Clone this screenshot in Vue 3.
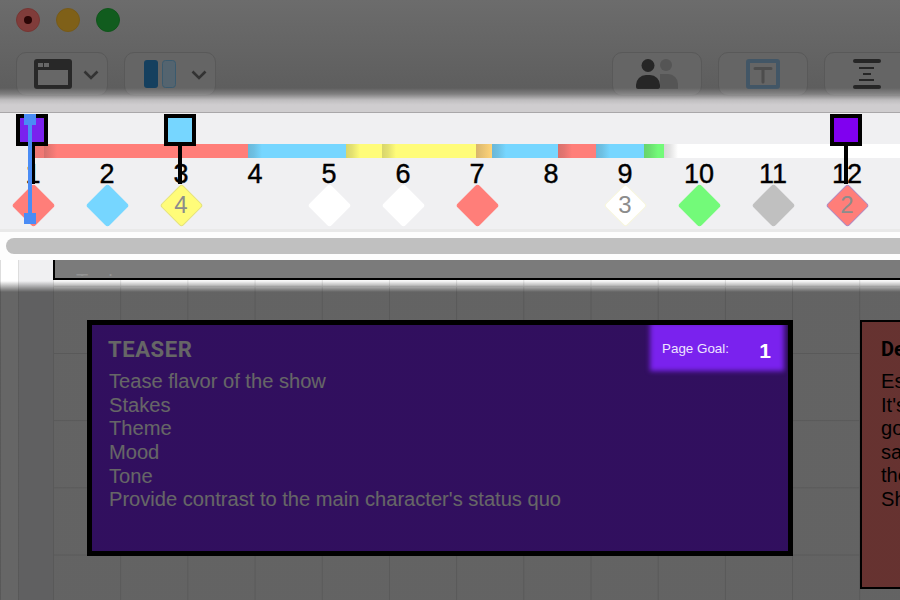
<script setup>
const numbers = [
  { n: 1, fill: '#ff7e79' },
  { n: 2, fill: '#76d6ff' },
  { n: 3, fill: '#fffc79', edge: '#e4e27a', label: 4 },
  { n: 4, fill: null },
  { n: 5, fill: '#ffffff' },
  { n: 6, fill: '#ffffff' },
  { n: 7, fill: '#ff7e79' },
  { n: 8, fill: null },
  { n: 9, fill: '#ffffff', edge: '#f7f6dc', label: 3 },
  { n: 10, fill: '#73fa79' },
  { n: 11, fill: '#c0c0c0' },
  { n: 12, fill: '#ff7e79', edge: '#b088c0', label: 2 }
]
const segments = [
  { w: 214, c: '#ff7e79', s: 'first' },
  { w: 98, c: '#76d6ff', s: 'shade' },
  { w: 36, c: '#fffc79', s: 'shade' },
  { w: 94, c: '#fffc79', s: 'shade' },
  { w: 16, c: '#ffd479', s: 'soft' },
  { w: 66, c: '#76d6ff', s: 'shade' },
  { w: 38, c: '#ff7e79', s: 'shade' },
  { w: 48, c: '#76d6ff', s: 'shade' },
  { w: 20, c: '#73fa79', s: 'shade' },
  { w: 236, c: '#ffffff', s: 'shade' }
]
const cardLines = ['Tease flavor of the show', 'Stakes', 'Theme', 'Mood', 'Tone', "Provide contrast to the main character's status quo"]
const sideLines = ['Establish the world', "It's the status quo", 'going on before', 'save the cat', 'the hero', 'Show']
</script>

<template>
  <div class="app">
    <header class="toolbar">
      <div class="lights">
        <span class="light red"><i></i></span>
        <span class="light amber"></span>
        <span class="light green"></span>
      </div>
      <div class="tools">
        <div class="group">
          <button class="btn wide">
            <svg width="38" height="30" viewBox="0 0 38 30">
              <rect width="38" height="30" rx="3" fill="#282828" />
              <rect x="4" y="11" width="30" height="15" fill="#676767" />
              <rect x="4" y="4" width="5" height="4" fill="#676767" />
              <rect x="10" y="4" width="5" height="4" fill="#676767" />
            </svg>
            <svg class="chev" width="16" height="10" viewBox="0 0 16 10"><path d="M1.5 1.5 8 8l6.500-6.500" fill="none" stroke="#333" stroke-width="2.600" /></svg>
          </button>
          <button class="btn wide">
            <svg width="32" height="28" viewBox="0 0 32 28">
              <rect width="14" height="28" rx="3" fill="#15405f" />
              <rect x="18.500" y=".5" width="13" height="27" rx="3" fill="#54646f" stroke="#3a5a6e" />
            </svg>
            <svg class="chev" width="16" height="10" viewBox="0 0 16 10"><path d="M1.5 1.5 8 8l6.500-6.500" fill="none" stroke="#333" stroke-width="2.600" /></svg>
          </button>
        </div>
        <div class="group">
          <button class="btn">
            <svg width="42" height="30" viewBox="0 0 42 30">
              <circle cx="30" cy="6" r="6" fill="#555" />
              <path d="M24 15h8a10 10 0 0 1 10 10v5H24z" fill="#555" />
              <circle cx="12" cy="6.500" r="6.500" fill="#262626" />
              <path d="M0 26a10 10 0 0 1 10-10h4a10 10 0 0 1 10 10v2a2 2 0 0 1-2 2H2a2 2 0 0 1-2-2z" fill="#262626" />
            </svg>
          </button>
          <button class="btn">
            <svg width="34" height="30" viewBox="0 0 34 30">
              <rect x="2" y="2" width="30" height="26" rx="1" fill="none" stroke="#425666" stroke-width="4" />
              <path d="M9 9.500h16M17 9.500V23" fill="none" stroke="#4d4d4d" stroke-width="3" stroke-linecap="round" />
            </svg>
          </button>
          <button class="btn last">
            <svg width="28" height="30" viewBox="0 0 28 30">
              <rect width="28" height="4" rx="2" fill="#262626" />
              <rect y="26" width="28" height="4" rx="2" fill="#262626" />
              <rect x="6" y="8" width="15" height="2" fill="#262626" />
              <rect x="10" y="14" width="8" height="2" fill="#262626" />
              <rect x="6" y="20" width="15" height="2" fill="#262626" />
            </svg>
          </button>
        </div>
      </div>
    </header>

    <section class="timeline">
      <div class="tracks">
        <div class="bar">
          <span v-for="(s, i) in segments" :key="i" class="seg" :class="s.s" :style="{ width: s.w + 'px', backgroundColor: s.c }"></span>
        </div>
        <div class="beats">
          <div v-for="b in numbers" :key="b.n" class="beat">
            <span class="num">{{ b.n }}</span>
            <span v-if="b.fill" class="diamond" :style="{ backgroundColor: b.fill, borderColor: b.edge || b.fill }"></span>
            <span v-else class="diamond none"></span>
            <span v-if="b.label" class="tag">{{ b.label }}</span>
          </div>
        </div>
        <div class="pin one"><span class="sq purple"></span><span class="stem"></span></div>
        <div class="pin three"><span class="sq sky"></span><span class="stem"></span></div>
        <div class="pin twelve"><span class="sq violet"></span><span class="stem"></span></div>
        <div class="cursor"><i></i><b></b><i></i></div>
      </div>
      <div class="scroll"><div class="thumb"></div></div>
    </section>

    <main class="canvas">
      <div class="ruler"></div>
      <div class="top-card"><span>Teal</span></div>
      <article class="card teaser">
        <h2>TEASER</h2>
        <p v-for="l in cardLines" :key="l">{{ l }}</p>
      </article>
      <article class="card side">
        <h3>Debate</h3>
        <p v-for="l in sideLines" :key="l">{{ l }}</p>
      </article>
      <div class="dim"></div>
      <div class="goal-clip">
        <div class="goal"><span>Page Goal:</span><strong>1</strong></div>
      </div>
    </main>
  </div>
</template>

<style>
html, body { margin: 0; padding: 0; background: #636363; }
</style>

<style scoped>
.app {
  width: 900px;
  height: 600px;
  overflow: hidden;
  display: flex;
  flex-direction: column;
  position: relative;
  font-family: "Liberation Sans", Arial, sans-serif;
}
.toolbar {
  height: 113px;
  flex: none;
  box-sizing: border-box;
  position: relative;
  background: linear-gradient(#6c6c6c, #5e5e5e 88px);
  border-bottom: 1px solid #a9a7a9;
  padding-top: 8px;
}
.toolbar::after {
  content: "";
  position: absolute;
  left: 0;
  right: 0;
  bottom: 0;
  height: 24px;
  background: linear-gradient(rgba(207, 205, 207, 0), rgba(207, 205, 207, .3) 25%, rgba(207, 205, 207, .85) 50%, #cfcdcf 70%);
}
.lights { display: flex; gap: 16px; padding-left: 16px; }
.light { width: 24px; height: 24px; border-radius: 50%; display: flex; align-items: center; justify-content: center; box-sizing: border-box; }
.red { background: #803c3a; border: 1px solid #763633; }
.red i { width: 8px; height: 8px; border-radius: 50%; background: #2a0606; }
.amber { background: #7f6018; border: 1px solid #775a18; }
.green { background: #115c1e; border: 1px solid #10551b; }
.tools { display: flex; justify-content: space-between; margin-top: 20px; padding-left: 16px; }
.group { display: flex; gap: 16px; }
.btn {
  width: 90px;
  height: 44px;
  box-sizing: border-box;
  padding: 0;
  display: flex;
  align-items: center;
  justify-content: center;
  background: #656565;
  border: 1px solid #595959;
  border-radius: 10px;
}
.wide { width: 92px; justify-content: flex-start; padding-left: 17px; }
.wide + .wide { padding-left: 19px; }
.chev { margin-left: 11px; margin-top: 2px; }
.wide + .wide .chev { margin-left: 15px; }
.last { margin-right: -14px; padding-right: 4px; }

.timeline { height: 147px; flex: none; background: #f0f0f2; display: flex; flex-direction: column; }
.tracks { height: 116px; flex: none; box-sizing: border-box; padding-top: 31px; position: relative; }
.bar { display: flex; height: 14px; margin-left: 34px; width: 866px; overflow: hidden; }
.seg { flex: none; height: 14px; }
.shade { background-image: linear-gradient(90deg, rgba(60, 60, 60, .2), rgba(60, 60, 60, .14) 6px, rgba(60, 60, 60, 0) 14px); }
.soft { background-image: linear-gradient(90deg, rgba(60, 60, 60, .2), rgba(60, 60, 60, 0)); }
.first { background-image: linear-gradient(90deg, rgba(60, 60, 60, .08), rgba(60, 60, 60, .08) 10px, rgba(60, 60, 60, .22) 10px, rgba(60, 60, 60, 0) 23px); }
.beats { display: grid; grid-template-columns: repeat(12, 74px); margin-left: -4px; }
.beat { position: relative; display: flex; flex-direction: column; align-items: center; }
.num { height: 30px; line-height: 32px; font-size: 27px; color: #000; -webkit-text-stroke: .4px #000; }
.diamond {
  width: 31px;
  height: 31px;
  box-sizing: border-box;
  margin-top: 1.500px;
  border: 1px solid;
  border-radius: 3px;
  transform: rotate(45deg);
}
.none { visibility: hidden; }
.tag {
  position: absolute;
  left: 0;
  right: 0;
  top: 32px;
  height: 30px;
  line-height: 30px;
  text-align: center;
  font-size: 24px;
  color: #8c8c8c;
}
.pin { position: absolute; top: 1px; width: 32px; display: flex; flex-direction: column; align-items: center; }
.one { left: 16px; }
.three { left: 164px; }
.twelve { left: 830px; }
.sq { width: 32px; height: 32px; box-sizing: border-box; border: 4px solid #000; flex: none; }
.purple { background: #7a22ee; }
.sky { background: #76d6ff; }
.violet { background: #8000f0; }
.stem { width: 4px; height: 38px; background: #000; }
.one .stem { margin-left: 2px; }
.cursor { position: absolute; left: 24px; top: 1px; width: 12px; display: flex; flex-direction: column; align-items: center; }
.cursor i { width: 12px; height: 11px; background: #4a8cf5; flex: none; }
.cursor b { width: 4px; height: 88px; background: #4a8cf5; flex: none; }
.scroll { flex: 1; border-top: 3px solid #e9e9e9; background: #fdfdfd; padding: 6px 0 0 6px; }
.thumb { height: 16px; width: 920px; border-radius: 8px; background: #c0c0c0; }

.canvas {
  flex: 1;
  position: relative;
  overflow: hidden;
  background-color: #f8f8f8;
  background-image: linear-gradient(90deg, #dedede 1px, transparent 1px), linear-gradient(#dedede 1px, transparent 1px);
  background-size: 67.2px 67.2px;
  background-position: 53px 25.800px;
}
.ruler { position: absolute; left: 0; top: 0; bottom: 0; width: 53px; box-sizing: border-box; background: linear-gradient(90deg, #ddd 1px, #fff 1px, #fff 18px, #ddd 18px, #ddd 19px, #f0f0f2 19px); }
.top-card {
  position: absolute;
  left: 53px;
  right: -4px;
  top: -40px;
  height: 60px;
  box-sizing: border-box;
  background: #7b7b7b;
  border: 2px solid #000;
  overflow: hidden;
}
.top-card span { position: absolute; left: 21px; top: 52px; height: 2px; overflow: hidden; line-height: 14px; font-size: 20px; color: #929292; }
.card { position: absolute; box-sizing: border-box; }
.card p { margin: 0; font-size: 20.130px; line-height: 23.6px; white-space: nowrap; }
.teaser { left: 87px; top: 60px; width: 706px; height: 236px; background: #7a26ec; border: 5px solid #000; padding: 12px 16px; color: #fff; }
.teaser p { margin-left: 1px; position: relative; top: .3px; }
.teaser h2 { margin: 0 0 7px; font: 700 22px/26px Roboto, sans-serif; letter-spacing: .6px; color: #fff; }
.side { left: 860px; top: 60px; width: 200px; height: 269px; background: #ff7e79; border: 2px solid #000; padding: 14px 19px; color: #000; }
.side h3 { margin: 0 0 8px; font: 700 20px/26px Roboto, sans-serif; }
.dim {
  position: absolute;
  inset: 0;
  background: linear-gradient(rgba(0, 0, 0, 0) 21px, rgba(0, 0, 0, .6) 32px);
}
.goal-clip {
  position: absolute;
  left: 92px;
  top: 65px;
  width: 695px;
  height: 226px;
  overflow: hidden;
}
.goal {
  position: absolute;
  z-index: 0;
  left: 558px;
  top: -3px;
  width: 134px;
  height: 49px;
  box-sizing: border-box;
  padding: 0 13px 0 12px;
  display: flex;
  align-items: center;
  justify-content: space-between;
  color: #eee6ff;
}
.goal::before {
  content: "";
  position: absolute;
  inset: 0;
  z-index: -1;
  background: #7a22ee;
  filter: blur(2.500px);
}
.goal span { font-size: 13.4px; margin-top: 3px; }
.goal strong { font-size: 21px; color: #fff; margin-top: 9px; }
</style>
